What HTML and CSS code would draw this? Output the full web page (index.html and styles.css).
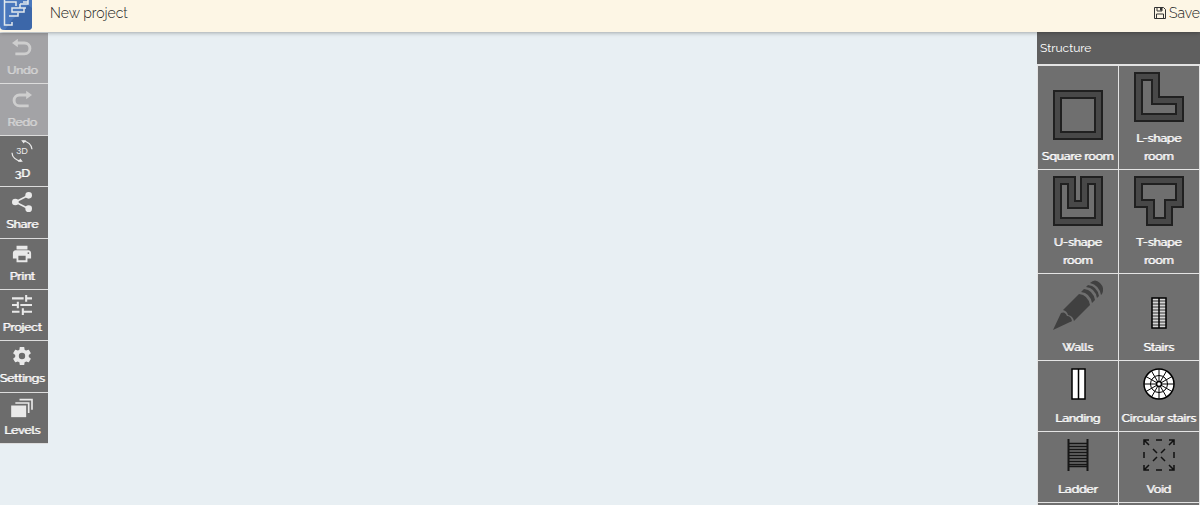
FILE: index.html
```
<!DOCTYPE html>
<html lang="en">
<head>
<meta charset="utf-8">
<meta name="viewport" content="width=device-width, initial-scale=1">
<title>New project</title>
<link rel="stylesheet" href="styles.css">
</head>
<body>
<div class="app">
  <header class="topbar">
    <a class="logo" href="#" aria-label="Home">
      <svg width="32" height="32" viewBox="0 0 32 32"><rect y="-4" width="32" height="34" rx="4" fill="#4a78bd"/><path d="M12 20 28 5l4 3v18a4 4 0 0 1-4 4H5z" fill="#3c67a9"/><path d="M28 0v4h-8M20 4v4M26 8H12v4h7M24 8v4h-6M9 16h9v-3M4.500 0v25H12v-3M4 2h12v4M23 2h5" fill="none" stroke="#e2e9ed" stroke-width="1.500"/></svg>
    </a>
    <h1 class="title">New project</h1>
    <button class="save" type="button">
      <svg width="12" height="12" viewBox="0 0 12 12" fill="none" stroke="#333"><path d="M.5.5h9l2 2v9H.5zM3 .5V4h5V.5M2.500 11.500V7h7v4.500"/><path d="M6 1h2v2.500H6z" fill="#333" stroke="none"/></svg>
      Save
    </button>
  </header>
  <main class="workspace">
    <nav class="tools" aria-label="Tools">
      <button class="tool" type="button" disabled><svg class="tool-icon" viewBox="0 0 24 24"><path d="M5 6h10a5 5 0 0 1 0 13H4" fill="none" stroke="currentColor" stroke-width="3.500"/><path d="M0 6l7-5v10z"/></svg>Undo</button>
      <button class="tool" type="button" disabled><svg class="tool-icon" viewBox="0 0 24 24"><path d="M19 6H9a5 5 0 0 0 0 13h11" fill="none" stroke="currentColor" stroke-width="3.500"/><path d="M24 6l-7-5v10z"/></svg>Redo</button>
      <button class="tool" type="button"><svg class="tool-icon" viewBox="0 0 24 24"><path d="M13 0c6 0 11 5 11 10M11 24C5 24 0 19 0 14" fill="none" stroke="currentColor" stroke-width="1.500"/><path d="M11-1h6l-3 4zM13 25H7l3-4z"/><text class="icon-text" x="12" y="16" text-anchor="middle">3D</text></svg>3D</button>
      <button class="tool" type="button"><svg class="tool-icon" viewBox="0 0 24 24"><path d="M20 4 4 12l16 8" fill="none" stroke="currentColor" stroke-width="2"/><circle cx="20" cy="4" r="4"/><circle cx="4" cy="12" r="4"/><circle cx="20" cy="20" r="4"/></svg>Share</button>
      <button class="tool" type="button"><svg class="tool-icon" viewBox="1 1 22 22"><path d="M19 8H5c-1.660 0-3 1.340-3 3v6h4v4h12v-4h4v-6c0-1.660-1.340-3-3-3zm-3 11H8v-5h8v5zm3-7a1 1 0 1 1 0-2 1 1 0 0 1 0 2zm-1-9H6v4h12V3z"/></svg>Print</button>
      <button class="tool" type="button"><svg class="tool-icon" viewBox="0 0 24 24"><path d="M0 4h14M18 4h6M17 0v8M0 12h6M10 12h14M7 8v8M0 20h9M14 20h10M13 16v8" fill="none" stroke="currentColor" stroke-width="2.500"/></svg>Project</button>
      <button class="tool" type="button"><svg class="tool-icon" viewBox="1 1 22 22"><path d="M19.430 12.980c.04-.32.07-.64.07-.98s-.03-.66-.07-.98l2.110-1.650c.19-.15.24-.42.12-.64l-2-3.460c-.12-.22-.39-.3-.61-.22l-2.490 1c-.52-.4-1.080-.73-1.690-.98l-.38-2.650C14.460 2.180 14.250 2 14 2h-4c-.25 0-.46.18-.49.42l-.38 2.650c-.61.25-1.170.59-1.690.98l-2.490-1c-.23-.09-.49 0-.61.22l-2 3.460c-.13.22-.07.49.12.64l2.110 1.650c-.04.32-.07.65-.07.98s.03.66.07.98l-2.110 1.650c-.19.15-.24.42-.12.64l2 3.460c.12.22.39.3.61.22l2.490-1c.52.4 1.080.73 1.690.98l.38 2.650c.03.24.24.42.49.42h4c.25 0 .46-.18.49-.42l.38-2.650c.61-.25 1.170-.59 1.690-.98l2.490 1c.23.09.49 0 .61-.22l2-3.460c.12-.22.07-.49-.12-.64l-2.110-1.650zM12 15.500a3.500 3.500 0 1 1 0-7 3.500 3.500 0 0 1 0 7z"/></svg>Settings</button>
      <button class="tool" type="button"><svg class="tool-icon" viewBox="0 0 24 24"><path d="M-1 9h18v14H-1z"/><path d="M4 6h16v12M9 2h15v12" fill="none" stroke="currentColor" stroke-width="2"/></svg>Levels</button>
    </nav>
    <section class="canvas" aria-label="Floor plan"></section>
    <aside class="library">
      <h2 class="library-title">Structure</h2>
      <div class="shapes">
        <button class="shape" type="button"><svg class="room" viewBox="0 0 50 50"><path class="wall" d="M1 1h48v48H1z"/><path class="floor" d="M8 8h34v34H8z"/></svg>Square room</button>
        <button class="shape" type="button"><svg class="room" viewBox="0 0 50 50"><path class="wall" d="M1 1h24v24h24v24H1z"/><path class="floor" d="M8 8h10v24h24v10H8z"/></svg>L-shape<br>room</button>
        <button class="shape" type="button"><svg class="room" viewBox="0 0 50 50"><path class="wall" d="M1 1h21v24h6V1h21v48H1z"/><path class="floor" d="M8 8h7v24h20V8h7v34H8z"/></svg>U-shape<br>room</button>
        <button class="shape" type="button"><svg class="room" viewBox="0 0 50 50"><path class="wall" d="M1 1h48v30H38v18H13V31H1z"/><path class="floor" d="M8 8h34v16H31v18H20V24H8z"/></svg>T-shape<br>room</button>
        <button class="shape" type="button"><svg class="room pencil" viewBox="0 0 50 50"><path d="M0 50 8 33q4-2 6 3 4 0 5 5-1 1-2 1zM10 30 26 14q9 1 11 11L21 41q-1-5-6-6-1-4-5-5zM28 12l3-3q9 1 11 11l-3 3q-2-10-11-11zM33 7l2-2q9 1 11 11l-2 2q-2-10-11-11zM37 3q5-5 10 0t2 11l-1 1q-2-10-11-12z"/></svg>Walls</button>
        <button class="shape" type="button"><svg class="symbol" viewBox="0 0 32 32"><path d="M9 1h14v30H9z" fill="#d5d5d5"/><path d="M9 4h14M9 7h14M9 10h14M9 13h14M9 16h14M9 19h14M9 22h14M9 25h14M9 28h14" stroke="#333"/><path d="M9 1h14v30H9zM16 1v30" fill="none" stroke="#000" stroke-width="1.500"/></svg>Stairs</button>
        <button class="shape" type="button"><svg class="symbol" viewBox="0 0 32 32"><path d="M10 1h13v30H10zM16.500 1v30" fill="#fff" stroke="#000" stroke-width="1.500"/></svg>Landing</button>
        <button class="shape" type="button"><svg class="symbol" viewBox="0 0 32 32" fill="none" stroke="#000"><circle cx="16" cy="16" r="15" fill="#fff" stroke-width="1.500"/><circle cx="16" cy="16" r="8.500"/><path d="M16 1v30M1 16h30M8.500 3l15 26M23.500 3l-15 26M3 8.500l26 15M29 8.500l-26 15"/><circle cx="16" cy="16" r="2.500" fill="#fff" stroke-width="1.500"/></svg>Circular stairs</button>
        <button class="shape" type="button"><svg class="symbol" viewBox="0 0 32 32" fill="none" stroke="#161616"><path d="M6.500 0v32M25.500 0v32" stroke-width="2"/><path d="M7 4.500h18M7 7.500h18M7 10.500h18M7 13.500h18M7 16.500h18M7 19.500h18M7 22.500h18M7 25.500h18M7 27.500h18" stroke-width="1.500"/></svg>Ladder</button>
        <button class="shape" type="button"><svg class="symbol" viewBox="0 0 32 32" fill="none" stroke="#111" stroke-width="1.500"><path d="M1 6V1h5M26 1h5v5M31 26v5h-5M6 31H1v-5M1 1l5 5M31 1l-5 5M31 31l-5-5M1 31l5-5M13 1h6M13 31h6M1 13v6M31 13v6M10 10l4 4M22 10l-4 4M10 22l4-4M22 22l-4-4"/></svg>Void</button>
        <button class="shape" type="button" aria-label="More"></button>
        <button class="shape" type="button" aria-label="More"></button>
      </div>
    </aside>
  </main>
</div>
</body>
</html>
```
FILE: styles.css
```
* { box-sizing: border-box; }

body {
  margin: 0;
  font-family: Raleway, Lato, sans-serif;
  background: #e8eff3;
}

button {
  border: 0;
  margin: 0;
  font: inherit;
  color: inherit;
  cursor: pointer;
}

svg { display: block; flex: none; }

.app {
  height: 100vh;
  display: flex;
  flex-direction: column;
  overflow: hidden;
}

.topbar {
  flex: none;
  display: flex;
  align-items: flex-start;
  position: relative;
  z-index: 1;
  height: 32px;
  background: #fdf6e5;
  box-shadow: 0 1px 4px rgba(0, 0, 0, 0.3);
  color: #222;
}

.title {
  flex: 1;
  margin: 0;
  padding-left: 18px;
  font-size: 14px;
  line-height: 26px;
  font-weight: 300;
}

.save {
  display: flex;
  align-items: center;
  gap: 3px;
  padding: 0;
  background: none;
  font-size: 14px;
  line-height: 26px;
  font-weight: 300;
}

.workspace {
  flex: 1;
  min-height: 0;
  display: flex;
  align-items: flex-start;
}

.tools {
  flex: none;
  width: 48px;
  min-height: 412px;
  padding-top: 1px;
  display: grid;
  grid-template-columns: 100%;
  grid-auto-rows: 1fr;
}

.tool {
  display: flex;
  flex-direction: column;
  align-items: center;
  justify-content: center;
  gap: 4px;
  padding: 0 4px 0 0;
  border-bottom: 1px solid #dcdcdc;
  background: #6c6c6c;
  color: #fff;
  font-size: 12px;
  line-height: 16px;
  font-weight: 400;
  text-shadow: 1px 0 currentColor;
  white-space: nowrap;
}

.tool:disabled {
  background: #a3a3a6;
  color: #d6d6d6;
}

.tool-icon {
  width: 20px;
  height: 20px;
  fill: currentColor;
  opacity: 0.85;
  overflow: visible;
}

.icon-text {
  font-family: "Liberation Sans", sans-serif;
  font-size: 11px;
  font-weight: 400;
  text-shadow: none;
}

.canvas {
  flex: 1;
  align-self: stretch;
}

.library {
  flex: none;
  width: 163px;
  background: #e4e4e4;
}

.library-title {
  margin: 0;
  padding-left: 3px;
  background: #5f5f5f;
  color: #fff;
  font-size: 12px;
  line-height: 32px;
  font-weight: 400;
}

.shapes {
  display: grid;
  grid-template-columns: 1fr 1fr;
  gap: 1px;
  padding: 2px 1px 0;
}

.shape {
  min-height: 70px;
  display: flex;
  flex-direction: column;
  align-items: center;
  justify-content: flex-end;
  padding: 6px 2px 4px 1px;
  background: #6f6f6f;
  color: #fff;
  font-size: 12px;
  line-height: 18px;
  font-weight: 400;
  text-shadow: 1px 0 currentColor;
  white-space: nowrap;
}

.room {
  width: 50px;
  height: 50px;
  margin-bottom: 7px;
}

.pencil {
  margin-bottom: 8px;
  fill: #404040;
}

.symbol {
  width: 32px;
  height: 32px;
  margin-bottom: 9px;
}

.wall { fill: #484848; stroke: #202020; stroke-width: 2; }
.floor { fill: #6f6f6f; stroke: #202020; stroke-width: 2; }
```
